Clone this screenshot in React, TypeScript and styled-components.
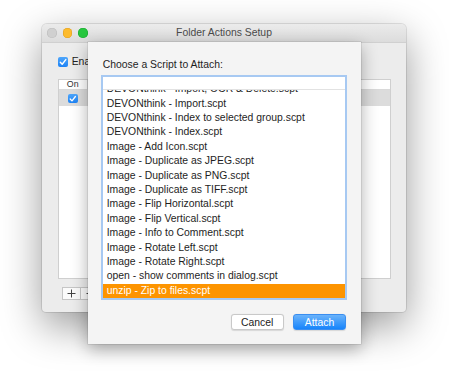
import React from 'react';
import styled, { createGlobalStyle } from 'styled-components';

const Global = createGlobalStyle`
  html, body { margin: 0; padding: 0; background: #ffffff; }
  body { font-family: "Helvetica Neue", "Liberation Sans", Arial, sans-serif; }
  * { box-sizing: border-box; }
`;

const Stage = styled.div`
  width: 449px;
  height: 375px;
  overflow: hidden;
  padding: 24px 0 0 42px;
`;

const Window = styled.div`
  position: relative;
  width: 364px;
  height: 288px;
  background: #ececec;
  border-radius: 5px 5px 4px 4px;
  box-shadow: 0 14px 40px rgba(0, 0, 0, 0.4), 0 0 0 1px rgba(0, 0, 0, 0.1);
  display: flex;
  flex-direction: column;
`;

const TitleBar = styled.div`
  height: 18.5px;
  flex: none;
  display: grid;
  grid-template-columns: 1fr auto 1fr;
  align-items: center;
  background: linear-gradient(#ebebeb, #dcdcdc);
  border-bottom: 1px solid #d0d0d0;
  border-radius: 5px 5px 0 0;
`;

const Lights = styled.div`
  display: flex;
  gap: 6px;
  padding-left: 5.2px;
`;

const Light = styled.span<{ $c: string; $b: string }>`
  width: 9.6px;
  height: 9.6px;
  border-radius: 50%;
  background: ${(p) => p.$c};
  box-shadow: inset 0 0 0 0.6px ${(p) => p.$b};
`;

const Title = styled.div`
  font-size: 10.4px;
  color: #4b4b4b;
  white-space: nowrap;
`;

const Body = styled.div`
  flex: 1;
  display: flex;
  flex-direction: column;
  padding: 14px 15px 0 15.7px;
`;

const CheckRow = styled.div`
  display: flex;
  align-items: center;
  gap: 4px;
  height: 10px;
  font-size: 10.4px;
  color: #222;
`;

const Check = styled.span<{ $size: number }>`
  width: ${(p) => p.$size}px;
  height: ${(p) => p.$size}px;
  border-radius: 2px;
  background: linear-gradient(#4ea6fb, #1d83f5);
  display: inline-flex;
  align-items: center;
  justify-content: center;
  flex: none;
`;

const Table = styled.div`
  margin-top: 12.5px;
  width: 333px;
  height: 200px;
  background: #ffffff;
  border: 1px solid #cfcfcf;
  display: flex;
  flex-direction: column;
`;

const THead = styled.div`
  height: 10px;
  display: flex;
  border-bottom: 1px solid #d9d9d9;
`;

const HeadCell = styled.div`
  width: 29px;
  font-size: 8.8px;
  line-height: 9px;
  text-align: center;
  color: #333;
  border-right: 1px solid #d9d9d9;
`;

const TRow = styled.div`
  height: 16px;
  display: flex;
  background: #dcdcdc;
`;

const TCell = styled.div`
  width: 29px;
  display: flex;
  align-items: center;
  justify-content: center;
  padding-top: 1px;
`;

const PlusMinus = styled.div`
  margin-top: 8px;
  margin-left: 4.6px;
  display: flex;
`;

const SegBtn = styled.div`
  width: 19px;
  height: 13px;
  background: #fbfbfb;
  border: 1px solid #c6c6c6;
  display: flex;
  align-items: center;
  justify-content: center;
  & + & { border-left: none; }
`;

const Sheet = styled.div`
  position: absolute;
  left: 46px;
  top: 18px;
  width: 273px;
  height: 302px;
  background: #f4f4f4;
  box-shadow: 0 5px 16px rgba(0, 0, 0, 0.32), 0 0 0 0.5px rgba(0, 0, 0, 0.15);
  display: flex;
  flex-direction: column;
  padding: 17px 13.7px 14px 13px;
`;

const Label = styled.div`
  font-size: 10.4px;
  line-height: 12px;
  color: #1e1e1e;
  padding-left: 1.7px;
`;

const ListBox = styled.div`
  margin-top: 4px;
  height: 225px;
  border: 2px solid #a7c9f2;
  background: #ffffff;
  display: flex;
  flex-direction: column;
  overflow: hidden;
`;

const ListHeader = styled.div`
  height: 12.5px;
  flex: none;
  border-bottom: 1px solid #e2e2e2;
`;

const Viewport = styled.div`
  flex: 1;
  overflow: hidden;
`;

const Rows = styled.div`
  margin-top: -7.3px;
`;

const Row = styled.div<{ $sel?: boolean }>`
  height: 14.4px;
  line-height: 14.4px;
  padding-left: 3.7px;
  font-size: 10.4px;
  white-space: nowrap;
  color: ${(p) => (p.$sel ? '#ffffff' : '#1e1e1e')};
  background: ${(p) => (p.$sel ? '#fd9400' : 'transparent')};
`;

const Buttons = styled.div`
  margin-top: 14px;
  display: flex;
  justify-content: flex-end;
  gap: 9.3px;
  padding-right: 1.3px;
`;

const Button = styled.div<{ $primary?: boolean }>`
  width: 53px;
  height: 16px;
  border-radius: 3px;
  font-size: 10.4px;
  display: flex;
  align-items: center;
  justify-content: center;
  color: ${(p) => (p.$primary ? '#ffffff' : '#222')};
  background: ${(p) => (p.$primary ? 'linear-gradient(#6ab3fb, #1784fb)' : '#ffffff')};
  border: 1px solid ${(p) => (p.$primary ? '#3a8ef0' : '#c9c9c9')};
  box-shadow: 0 0.5px 1px rgba(0, 0, 0, 0.12);
`;

const CheckMark = ({ s }: { s: number }) => (
  <svg width={s} height={s} viewBox="0 0 10 10">
    <path d="M2.3 5.2 L4.2 7.2 L7.8 2.6" fill="none" stroke="#fff" strokeWidth="1.4" strokeLinecap="round" strokeLinejoin="round" />
  </svg>
);

const scripts = [
  'DEVONthink - Import, OCR & Delete.scpt',
  'DEVONthink - Import.scpt',
  'DEVONthink - Index to selected group.scpt',
  'DEVONthink - Index.scpt',
  'Image - Add Icon.scpt',
  'Image - Duplicate as JPEG.scpt',
  'Image - Duplicate as PNG.scpt',
  'Image - Duplicate as TIFF.scpt',
  'Image - Flip Horizontal.scpt',
  'Image - Flip Vertical.scpt',
  'Image - Info to Comment.scpt',
  'Image - Rotate Left.scpt',
  'Image - Rotate Right.scpt',
  'open - show comments in dialog.scpt',
  'unzip - Zip to files.scpt',
];

export default function App() {
  return (
    <>
      <Global />
      <Stage>
        <Window>
          <TitleBar>
            <Lights>
              <Light $c="#d0d0d0" $b="#bdbdbd" />
              <Light $c="#fdbb2d" $b="#e0a020" />
              <Light $c="#27c73f" $b="#1ea932" />
            </Lights>
            <Title>Folder Actions Setup</Title>
            <div />
          </TitleBar>
          <Body>
            <CheckRow>
              <Check $size={10}>
                <CheckMark s={10} />
              </Check>
              <span>Enable Folder Actions</span>
            </CheckRow>
            <Table>
              <THead>
                <HeadCell>On</HeadCell>
              </THead>
              <TRow>
                <TCell>
                  <Check $size={9.5}>
                    <CheckMark s={9.5} />
                  </Check>
                </TCell>
              </TRow>
            </Table>
            <PlusMinus>
              <SegBtn>
                <svg width="9" height="9" viewBox="0 0 9 9">
                  <path d="M4.5 0.5 V8.5 M0.5 4.5 H8.5" stroke="#444" strokeWidth="1" />
                </svg>
              </SegBtn>
              <SegBtn>
                <svg width="9" height="9" viewBox="0 0 9 9">
                  <path d="M0.5 4.5 H8.5" stroke="#444" strokeWidth="1" />
                </svg>
              </SegBtn>
            </PlusMinus>
          </Body>
          <Sheet>
            <Label>Choose a Script to Attach:</Label>
            <ListBox>
              <ListHeader />
              <Viewport>
                <Rows>
                  {scripts.map((s, i) => (
                    <Row key={s} $sel={i === scripts.length - 1}>
                      {s}
                    </Row>
                  ))}
                </Rows>
              </Viewport>
            </ListBox>
            <Buttons>
              <Button>Cancel</Button>
              <Button $primary>Attach</Button>
            </Buttons>
          </Sheet>
        </Window>
      </Stage>
    </>
  );
}
